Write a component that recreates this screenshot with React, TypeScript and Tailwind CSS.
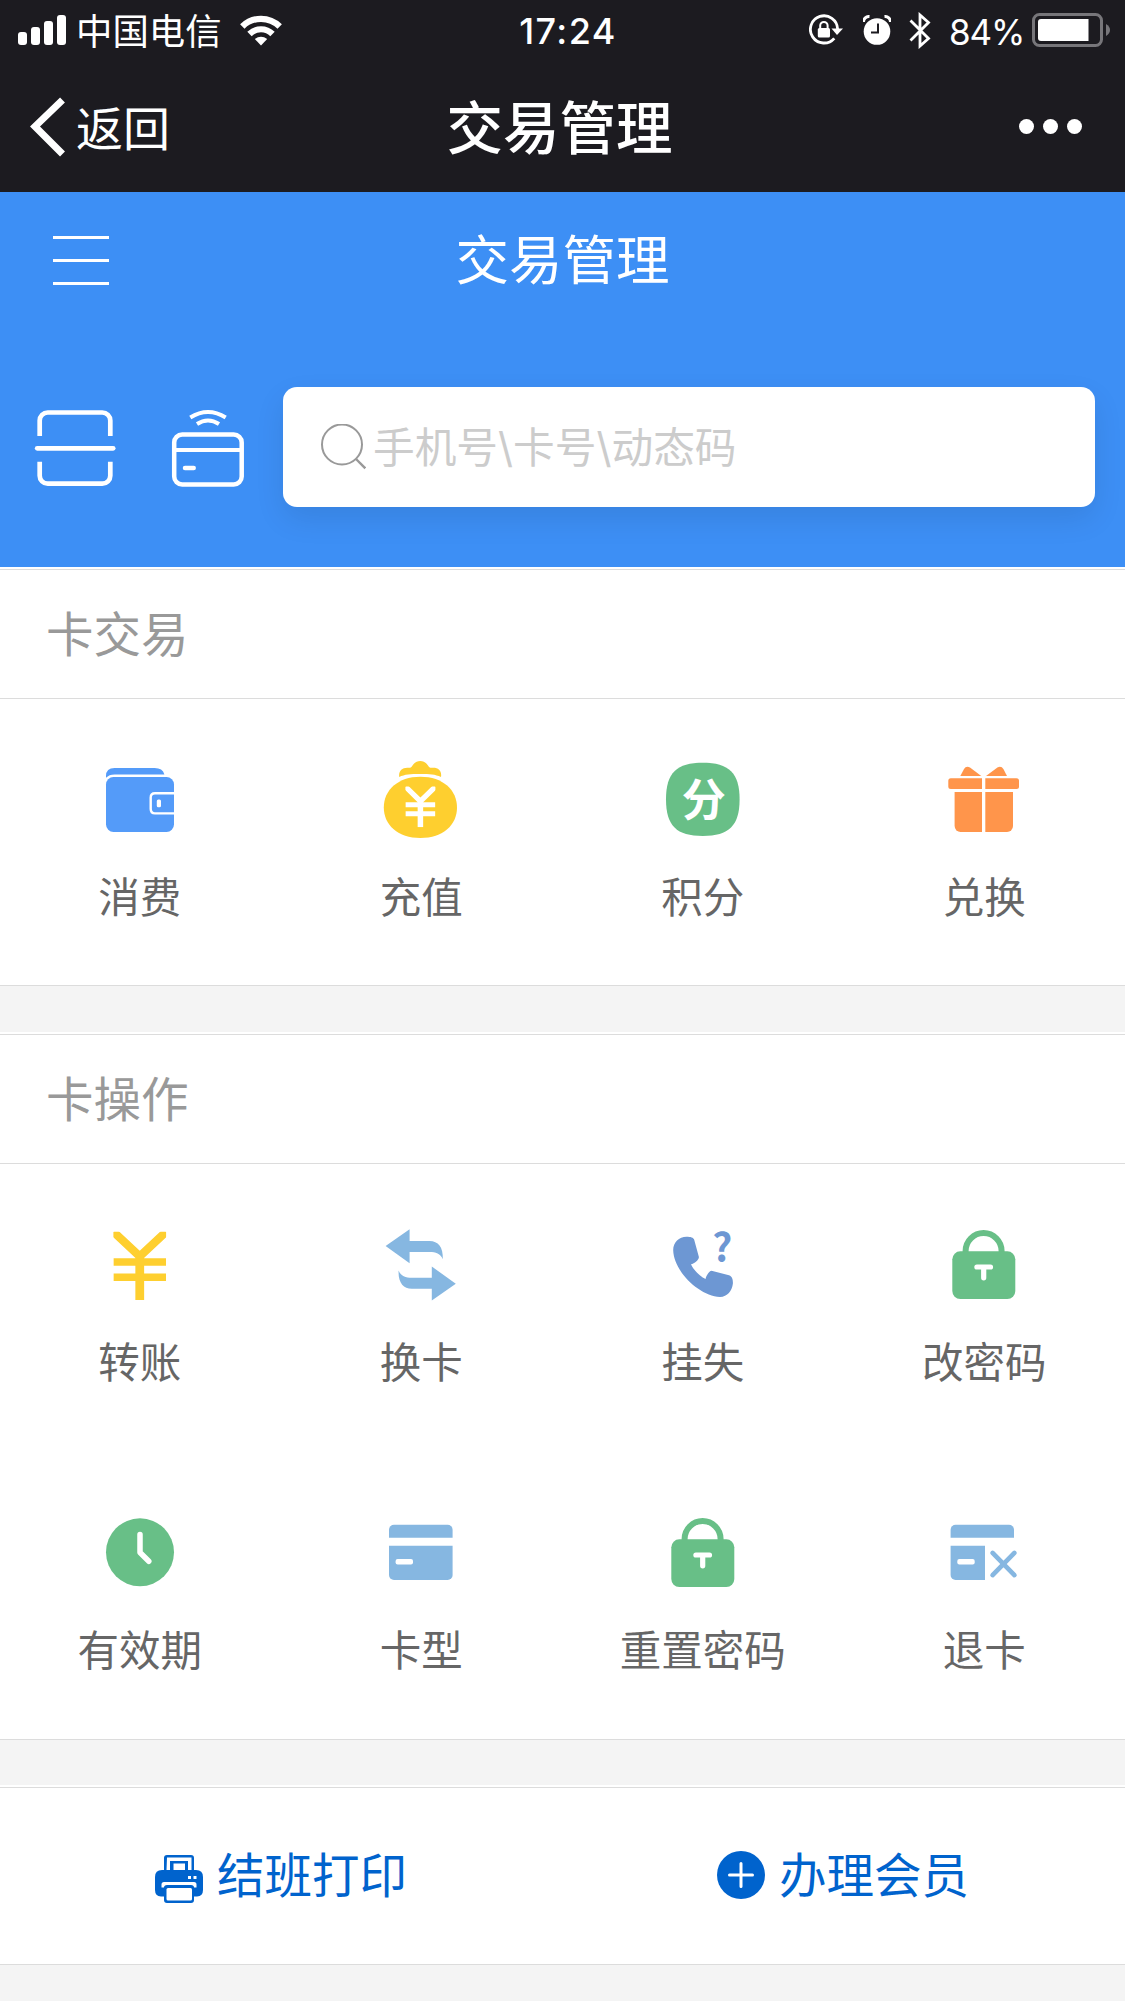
import { useState, type ReactNode } from 'react';
import { JapaneseYen } from 'lucide-react';

interface MenuItem {
  label: string;
  icon: ReactNode;
}

const CJK_FONT = '"Noto Sans CJK SC", sans-serif';

function LockIcon() {
  return (
    <svg viewBox="0 0 80 80" className="size-20">
      <path d="M21.6 30V26a18 18 0 0 1 36 0v4" fill="none" stroke="#68bf87" strokeWidth="6" />
      <rect x="8.3" y="26.3" width="63" height="47.7" rx="8" fill="#68bf87" />
      <path d="M32.9 42h13.6M39.7 42v10.8" stroke="#fff" strokeWidth="5.2" strokeLinecap="round" />
    </svg>
  );
}

function WalletIcon() {
  return (
    <svg viewBox="0 0 80 80" className="size-20" fill="#549bf9">
      <path d="M6 17.8V16Q6 8 14.6 8h40q8 0 9.8 6.4H14.6q-5.6 0-8.6 3.4z" />
      <rect x="6" y="17" width="68" height="55" rx="7.5" />
      <path d="M74.6 33.3H55q-4.3 0-4.3 4.3v11.5q0 4.3 4.3 4.3h19.6" fill="none" stroke="#fff" strokeWidth="2.4" />
      <rect x="56.8" y="39.5" width="4.2" height="7.8" rx="1.5" fill="#fff" />
    </svg>
  );
}

function MoneyBagIcon() {
  return (
    <svg viewBox="0 0 80 80" className="size-20" fill="#fecf2f">
      <path d="M18.2 17C17.5 11 21 7.5 27 7.8C29.5 8 30.5 7.5 31.5 5.5C35 -0.5 43.5 -0.5 47 5.5C48 7.5 49 8 51.5 7.8C57.5 7.5 61 11 60 17C54 14.3 49 14 39.4 14C29 14 24 14.3 18.2 17z" />
      <path d="M39.4 16.7C62 16.7 76 30 76 47.5C76 65 62 78 39.4 78C17 78 2.8 65 2.8 47.5C2.8 30 17 16.7 39.4 16.7z" />
      <JapaneseYen
        x="24.4"
        y="26.6"
        width="30"
        height="40.6"
        viewBox="6 3 12 18"
        preserveAspectRatio="none"
        color="#fff"
        strokeWidth={2.2}
        strokeLinecap="butt"
      />
    </svg>
  );
}

function PointsIcon() {
  return (
    <svg viewBox="0 0 80 80" className="size-20">
      <path d="M39.8 2.7C66 2.7 76.6 13 76.6 39.3S66 76 39.8 76S3 66 3 39.3S14 2.7 39.8 2.7z" fill="#68bf87" />
      <text x="40.8" y="56" textAnchor="middle" fontSize="44" fontWeight="700" fontFamily={CJK_FONT} fill="#fff">
        分
      </text>
    </svg>
  );
}

function GiftIcon() {
  return (
    <svg viewBox="0 0 80 80" className="size-20" fill="#ff954b">
      <path d="M16.3 16L20 9q2-3.4 6-1.6L37.3 16z" />
      <path d="M63 16L59.4 9q-2-3.4-6-1.6L42 16z" />
      <path d="M6.8 18.3H38V29H6.8a2.5 2.5 0 0 1-2.5-2.5v-5.7a2.5 2.5 0 0 1 2.5-2.5z" />
      <path d="M41.3 18.3h31.2a2.5 2.5 0 0 1 2.5 2.5v5.7a2.5 2.5 0 0 1-2.5 2.5H41.3z" />
      <path d="M10.6 32H38v40H16.6a6 6 0 0 1-6-6z" />
      <path d="M41.3 32H69v34a6 6 0 0 1-6 6H41.3z" />
    </svg>
  );
}

function YenIcon() {
  return (
    <svg viewBox="0 0 80 80" className="size-20">
      <JapaneseYen
        x="13.4"
        y="6.7"
        width="52.7"
        height="68.3"
        viewBox="6 3 12 18"
        preserveAspectRatio="none"
        color="#fecf2f"
        strokeWidth={2}
        strokeLinecap="butt"
      />
    </svg>
  );
}

function SwapIcon() {
  const arrow = 'M4.6 21L28.6 4.3V16h20C57 16 62.4 22 61.8 34.3C59.6 28.5 54.6 27 48.6 27h-20V38.3z';
  return (
    <svg viewBox="0 0 80 80" className="size-20" fill="#86b7e1">
      <path d={arrow} />
      <path d={arrow} transform="rotate(180 39.7 39.9)" />
    </svg>
  );
}

function PhoneLostIcon() {
  return (
    <svg viewBox="0 0 80 80" className="size-20" fill="#6d97d3">
      <path d="M10.2 25C10.2 17 16 12 23.5 11.7C27.5 11.7 30.6 12.5 31.2 14.8L35.9 32C36 35 31.5 39 28 39.3C30.5 45 37 51.5 42.6 54C43 51 46 46 48.5 45.7L66 50.2C69.5 51.3 70 55 69.9 58.5C69 66 64.5 71.8 57 72C36 71 10.5 46 10.2 25z" />
      <text x="59.3" y="36.6" textAnchor="middle" fontSize="39" fontWeight="700" fontFamily={CJK_FONT}>
        ?
      </text>
    </svg>
  );
}

function ClockIcon() {
  return (
    <svg viewBox="0 0 80 80" className="size-20">
      <circle cx="40" cy="39.3" r="34" fill="#68bf87" />
      <path d="M40 21.5v18l8.8 8.8" fill="none" stroke="#fff" strokeWidth="5.5" strokeLinecap="round" strokeLinejoin="round" />
    </svg>
  );
}

function CardIcon() {
  return (
    <svg viewBox="0 0 80 80" className="size-20" fill="#86b7e1">
      <path d="M8 24.7v-8a5 5 0 0 1 5-5h53.6a5 5 0 0 1 5 5v8z" />
      <path d="M8 32.7h63.6V62a5 5 0 0 1-5 5H13a5 5 0 0 1-5-5z" />
      <rect x="14.6" y="46" width="17.4" height="5.6" rx="2" fill="#fff" />
    </svg>
  );
}

function CardReturnIcon() {
  return (
    <svg viewBox="0 0 80 80" className="size-20" fill="#86b7e1">
      <path d="M6.6 24.7v-8a5 5 0 0 1 5-5H65a5 5 0 0 1 5 5v8z" />
      <path d="M6.6 32.7H41V67H11.6a5 5 0 0 1-5-5z" />
      <rect x="13.3" y="46" width="17.4" height="5.6" rx="2" fill="#fff" />
      <path d="M48.6 39.9l21.8 22.2M70.4 39.9L48.6 62.1" stroke="#86b7e1" strokeWidth="4.7" strokeLinecap="round" />
    </svg>
  );
}

const TRADE_ITEMS: MenuItem[] = [
  { label: '消费', icon: <WalletIcon /> },
  { label: '充值', icon: <MoneyBagIcon /> },
  { label: '积分', icon: <PointsIcon /> },
  { label: '兑换', icon: <GiftIcon /> },
];

const CARD_ITEMS: MenuItem[] = [
  { label: '转账', icon: <YenIcon /> },
  { label: '换卡', icon: <SwapIcon /> },
  { label: '挂失', icon: <PhoneLostIcon /> },
  { label: '改密码', icon: <LockIcon /> },
  { label: '有效期', icon: <ClockIcon /> },
  { label: '卡型', icon: <CardIcon /> },
  { label: '重置密码', icon: <LockIcon /> },
  { label: '退卡', icon: <CardReturnIcon /> },
];

function StatusBar() {
  return (
    <div className="flex h-16 items-start justify-between pt-2 pr-[14px] pl-[18px]">
      <div className="flex h-12 w-[400px] items-center">
        <svg viewBox="0 0 48 30" className="-mt-1 h-[30px] w-12" fill="#fff">
          <rect x="0" y="17" width="9" height="13" rx="3" />
          <rect x="13" y="12" width="9" height="18" rx="3" />
          <rect x="26" y="6" width="9" height="24" rx="3" />
          <rect x="39" y="0" width="9" height="30" rx="3" />
        </svg>
        <span className="ml-[10px] w-36 whitespace-nowrap text-[36.4px] leading-[48px]">中国电信</span>
        <svg viewBox="0 0 42 31" className="-mt-1 ml-5 h-[31px] w-[42px]" fill="none" stroke="#fff" strokeWidth="6.2">
          <path d="M2.3 11.5a26.5 26.5 0 0 1 37.4 0" />
          <path d="M9.5 19a16.3 16.3 0 0 1 23 0" />
          <path d="M14.8 24q6.2-4.6 12.4 0L21 30.5z" fill="#fff" stroke="none" />
        </svg>
      </div>
      <span className="pl-[7px] text-[36px] leading-[46px] font-medium tracking-[1.4px]">17:24</span>
      <div className="flex h-12 w-[400px] items-center justify-end">
        <svg viewBox="0 0 34 32" className="-mt-1 h-8 w-[34px]" fill="none" stroke="#fff">
          <path d="M25.3 24.3A13.6 13.6 0 1 1 28.6 15" strokeWidth="2.8" />
          <path d="M22.5 14.5H34l-6 6.5z" fill="#fff" stroke="none" />
          <rect x="8.8" y="14" width="12.2" height="9.5" rx="1.5" fill="#fff" stroke="none" />
          <path d="M11.2 15v-3.4a3.7 3.7 0 0 1 7.4 0V15" strokeWidth="2" />
        </svg>
        <svg viewBox="0 0 28 30" className="-mt-1 ml-5 h-[30px] w-7">
          <circle cx="14" cy="16.5" r="13.3" fill="#fff" />
          <path d="M0.5 7a5.5 5.5 0 0 1 6-5.5M27.5 7a5.5 5.5 0 0 0-6-5.5" fill="none" stroke="#fff" strokeWidth="3" />
          <path d="M15 8.5v9H8" fill="none" stroke="#1c1b20" strokeWidth="2" />
        </svg>
        <svg viewBox="0 0 22 37" className="-mt-1 ml-[18px] h-[37px] w-[22px]" fill="none" stroke="#fff" strokeWidth="2.8">
          <path d="M1.5 8.5L19.5 26.5L11 34V3l8.5 7.5L1.5 28.5" />
        </svg>
        <span className="ml-[18px] w-[76px] text-[35px] leading-[46px] tracking-[-1.1px] whitespace-nowrap">84%</span>
        <svg viewBox="0 0 79 34" className="-mt-1 ml-[7px] h-[34px] w-[79px] shrink-0">
          <rect x="1.5" y="1.5" width="68" height="31" rx="6" fill="none" stroke="#77767a" strokeWidth="3" />
          <path d="M9 6h47.5v22H9a3 3 0 0 1-3-3V9a3 3 0 0 1 3-3z" fill="#fff" />
          <path d="M74 11q4 2.5 4 6t-4 6z" fill="#77767a" />
        </svg>
      </div>
    </div>
  );
}

function NavBar() {
  return (
    <div className="flex h-[125px] items-center justify-between pr-[43px] pl-[30px]">
      <button className="flex w-[294px] items-center">
        <svg viewBox="0 0 35 60" className="h-[60px] w-[35px]" fill="none" stroke="#fff" strokeWidth="7">
          <path d="M32.5 3L5 29.5L32.5 57" />
        </svg>
        <span className="mt-1 ml-[11px] text-[47px] leading-[64px]">返回</span>
      </button>
      <h1 className="-mt-1.5 font-['Noto_Sans_CJK_SC',sans-serif] text-[56.5px] leading-[80px] font-medium">交易管理</h1>
      <div className="flex w-[287px] justify-end gap-[9px]">
        <i className="size-[15px] rounded-full bg-white" />
        <i className="size-[15px] rounded-full bg-white" />
        <i className="size-[15px] rounded-full bg-white" />
      </div>
    </div>
  );
}

function Section({ title, items, gridClass }: { title: string; items: MenuItem[]; gridClass: string }) {
  return (
    <section className="mt-0.5 border-y border-[#dcdcdc] bg-white">
      <h3 className="h-32 pl-[46px] text-[47.5px] leading-[130px] text-[#999]">{title}</h3>
      <div className={`-ml-px grid grid-cols-4 gap-y-[120px] border-t border-[#dcdcdc] pt-[61px] ${gridClass}`}>
        {items.map((item) => (
          <div key={item.label} className="flex flex-col items-center">
            {item.icon}
            <span className="mt-7 text-[41.5px] leading-[60px] text-[#666]">{item.label}</span>
          </div>
        ))}
      </div>
    </section>
  );
}

export default function App() {
  const [keyword, setKeyword] = useState('');

  return (
    <div className="flex h-[2001px] w-[1125px] flex-col overflow-hidden bg-[#f4f4f4] font-[Inter,'Noto_Sans_CJK_SC',sans-serif]">
      <header className="h-48 bg-[#1c1b20] text-white">
        <StatusBar />
        <NavBar />
      </header>

      <div className="h-[375px] bg-[#3d8ff5] text-white">
        <div className="flex h-[136px] items-center justify-between px-[53px]">
          <button className="flex flex-col gap-5">
            <i className="h-[3px] w-14 bg-white" />
            <i className="h-[3px] w-14 bg-white" />
            <i className="h-[3px] w-14 bg-white" />
          </button>
          <h2 className="mt-0.5 text-[53.5px] leading-[80px]">交易管理</h2>
          <div className="w-14" />
        </div>
        <div className="mt-[59px] flex h-[120px] items-center pl-[34px]">
          <svg viewBox="0 0 84 80" className="mt-0.5 h-20 w-[84px]" fill="none" stroke="#fff" strokeWidth="4.7">
            <path d="M5.7 28V12.5a8 8 0 0 1 8-8h54.6a8 8 0 0 1 8 8V28" />
            <path d="M5.7 53.7v14a8 8 0 0 0 8 8h54.6a8 8 0 0 0 8-8v-14" />
            <path d="M3.2 40.3h76" strokeLinecap="round" />
          </svg>
          <svg viewBox="0 0 74 80" className="mt-0.5 ml-[53px] h-20 w-[74px]" fill="none" stroke="#fff" strokeWidth="4.5">
            <path d="M19.3 9.5Q37-1.5 54.7 9.5M26 16Q37 9 48 16" strokeWidth="4" />
            <rect x="3.2" y="26.6" width="67.5" height="49.8" rx="8" />
            <path d="M3.2 42h67.5" strokeWidth="4" />
            <path d="M14 60h8.7" strokeLinecap="round" />
          </svg>
          <label className="ml-[38px] flex h-[120px] w-[812px] items-center rounded-[14px] bg-white pl-[37px] shadow-[0_12px_30px_rgba(0,0,0,0.09)]">
            <svg viewBox="0 0 46 46" className="size-[46px]" fill="none" stroke="#999" strokeWidth="2">
              <circle cx="22" cy="20.500" r="20" />
              <path d="M36 35l9.3 9.3" strokeWidth="2.4" />
            </svg>
            <input
              value={keyword}
              onChange={(e) => setKeyword(e.target.value)}
              placeholder="手机号\卡号\动态码"
              className="mt-0.5 ml-[7px] w-[640px] text-[41.7px] leading-[60px] text-[#666] outline-none placeholder:text-[#ccc]"
            />
          </label>
        </div>
      </div>

      <div className="flow-root bg-white">
        <Section title="卡交易" items={TRADE_ITEMS} gridClass="pb-[57px]" />
      </div>
      <div className="mt-[46px] flow-root bg-white">
        <Section title="卡操作" items={CARD_ITEMS} gridClass="pb-[58px]" />
      </div>

      <div className="mt-[45px] border-t-2 border-white">
        <div className="flex h-[178px] border-y border-[#dcdcdc] bg-white pr-px text-[47.5px] leading-[64px] text-[#0063cd]">
          <button className="flex flex-1 items-center justify-center gap-[14px]">
            <svg viewBox="0 0 48 48" className="mt-1.5 size-12" fill="#0063cd">
              <path d="M12 0h24a3 3 0 0 1 3 3v12h2q7 0 7 7v13q0 6-6 6.5h-3V45a3 3 0 0 1-3 3H12a3 3 0 0 1-3-3v-3.5H6Q0 41 0 35V22q0-7 7-7h2V3a3 3 0 0 1 3-3z" />
              <path d="M12 2.5h24.5V15H33V6H15v9h-3.5z" fill="#fff" />
              <path d="M18.5 8.5H30V15H18.5z" fill="#fff" />
              <path d="M33 21h3v3h-3zM38.5 21h3v3h-3z" fill="#fff" />
              <path d="M6.5 32.5v-3Q6.5 27 9 27h30q2.5 0 2.5 2.5v3H39q0-2.5-3-2.5H12q-3 0-3 2.5z" fill="#fff" />
              <rect x="11.5" y="33" width="25.5" height="12.5" rx="1.5" fill="#fff" />
            </svg>
            <span>结班打印</span>
          </button>
          <button className="flex flex-1 items-center justify-center gap-[14px]">
            <svg viewBox="0 0 48 48" className="-mt-0.5 size-12">
              <circle cx="24" cy="24" r="24" fill="#0063cd" />
              <path d="M12.5 24h23M24 12.5v23" stroke="#fff" strokeWidth="3" strokeLinecap="round" />
            </svg>
            <span>办理会员</span>
          </button>
        </div>
      </div>
    </div>
  );
}
